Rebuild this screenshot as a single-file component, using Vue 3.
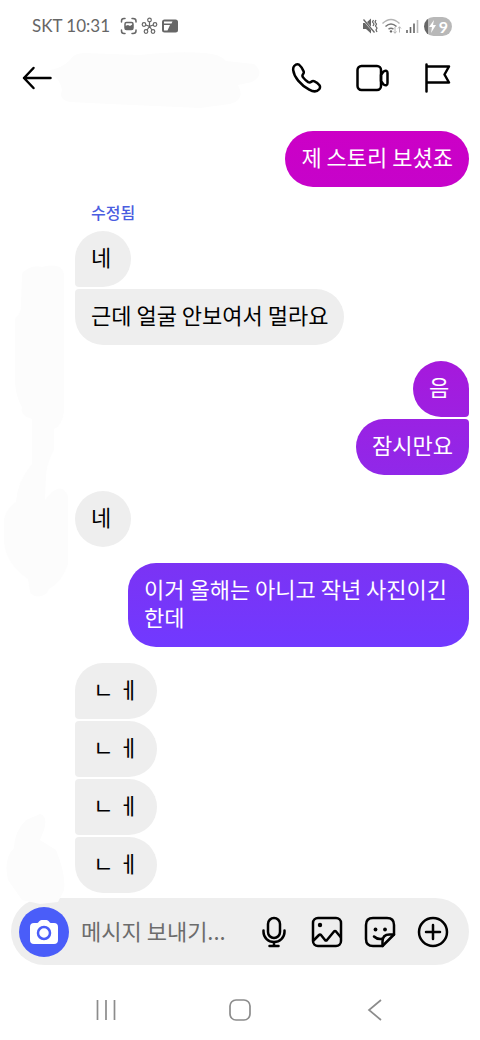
<script setup>
const groups = [
  { side: 'sent', items: [{ text: '제 스토리 보셨죠', tone: 'magenta' }] },
  { side: 'received', label: '수정됨', items: [{ text: '네' }, { text: '근데 얼굴 안보여서 멀라요' }] },
  { side: 'sent', items: [{ text: '음', tone: 'orchid' }, { text: '잠시만요', tone: 'violet' }] },
  { side: 'received', items: [{ text: '네' }] },
  { side: 'sent', items: [{ text: '이거 올해는 아니고 작년 사진이긴 한데', tone: 'indigo' }] },
  {
    side: 'received',
    wide: true,
    items: [{ text: 'ㄴ ㅔ' }, { text: 'ㄴ ㅔ' }, { text: 'ㄴ ㅔ' }, { text: 'ㄴ ㅔ' }],
  },
]
</script>

<template>
  <div class="screen">
    <div class="status">
      <span class="carrier">SKT 10:31</span>
      <svg class="status-left" width="60" height="20" viewBox="0 0 60 20" aria-hidden="true">
        <g fill="none" stroke="#666" stroke-width="1.5" stroke-linecap="round">
          <path d="M1.5 6V5Q1.5 2.5 4 2.500H5M12 2.500h1Q16 2.500 16 5v1M16 14v1q0 2.500-3 2.500h-1M5 17.500H4Q1.500 17.500 1.500 15v-1" />
          <rect x="5" y="6.500" width="8" height="7" rx="1.500" />
        </g>
        <path d="M5 10l3-1 2 1 3-2v5.500H5z" fill="#666" />
        <g fill="none" stroke="#666" stroke-width="1.200">
          <circle cx="29.500" cy="4" r="1.800" />
          <circle cx="24" cy="8.500" r="1.800" />
          <circle cx="35" cy="8.500" r="1.800" />
          <circle cx="26" cy="15.500" r="1.800" />
          <circle cx="33" cy="15.500" r="1.800" />
          <path d="M29.500 5.800V10M25.700 9l3.800 1.400L33.300 9M27 14l2.500-3.500L32 14" />
        </g>
        <rect x="42" y="3.500" width="16" height="13" rx="2.500" fill="#666" />
        <path d="M44 5.500h8.500l-1 2H44zM44 9h6l-2.500 5.500H44z" fill="#fff" />
      </svg>
      <svg class="status-right" width="58" height="20" viewBox="0 0 58 20" aria-hidden="true">
        <path d="M1 7h3l5-4.500v15L4 13H1z" fill="#666" />
        <path d="M1 3l12 14" stroke="#fff" stroke-width="2" />
        <path d="M1.500 3.500l11 13" stroke="#666" stroke-width="1.300" />
        <path d="M11.500 4l-1 2 1.500 2-1 2M14 4l-1 2 1.500 2-1 2 1.500 2-1 2 1 2" fill="none" stroke="#666" stroke-width="1.200" />
        <g fill="none" stroke="#b4b4b4" stroke-width="1.500">
          <path d="M20.500 7.500Q29 -.5 37.500 7.500" />
          <path d="M23.500 10.500Q29 5.500 34.500 10.500" stroke="#777" />
          <path d="M26.500 13.200Q29 11.500 31.500 13.200" stroke="#777" />
          <path d="M33 11v6M31.500 15.500l1.500 1.800 1.500-1.800M37.500 16.500V11M36 12.500l1.500-1.800 1.500 1.800" stroke-width="1" />
        </g>
        <path d="M29 14l1.500 1.200L29 17l-1.500-1.800z" fill="#666" />
        <path d="M45 17v-3M48.500 17v-6M52 17V7.500" stroke="#666" stroke-width="1.600" />
        <path d="M55.500 17V4" stroke="#bbb" stroke-width="1.600" />
      </svg>
      <span class="battery">
        <svg width="9" height="13" viewBox="0 0 9 13" aria-hidden="true">
          <path d="M6 0L1 7h3L3 13l5-8H5z" fill="#fff" />
        </svg>
        <span>9</span>
      </span>
    </div>

    <header class="header">
      <svg class="smudge name-smudge" width="212" height="58" viewBox="0 0 212 58" aria-hidden="true">
        <path d="M0 18Q12 16 20 8 24 1 34 1L90 3Q125-1 155 1 170 2 176 9L204 12Q216 22 202 30L188 33Q196 48 180 52L150 56 60 52 20 50Q8 48 12 38 10 26 0 22z" fill="#fcfcfc" />
      </svg>
      <button class="icon back" aria-label="뒤로">
        <svg width="30" height="24" viewBox="0 0 30 24">
          <path d="M28.500 12H2M11.500 2L2 12l9.500 10" fill="none" stroke="#000" stroke-width="2.500" stroke-linecap="round" stroke-linejoin="round" />
        </svg>
      </button>
      <div class="actions">
        <button class="icon" aria-label="음성 통화">
          <svg width="32" height="32" viewBox="0 0 32 32">
            <path d="M4.200 4Q6.500 1.500 9 2.600C11.300 4.500 12.800 7 13.700 9.500Q14.100 11 12.900 12.400 11.900 14 13.100 15.400C14.800 17.800 16.300 19 18.200 20.100Q19.800 20.900 21.300 19.700 22.800 18.500 24.500 19.300 27.500 20.700 29.500 23.200 30.700 25 29.200 27.200C26.900 30 23.200 29.900 19.200 27.700 10.300 22.700 4 15 3.200 8.200Q2.900 5.500 4.200 4z" fill="none" stroke="#000" stroke-width="2.500" stroke-linejoin="round" />
          </svg>
        </button>
        <button class="icon" aria-label="영상 통화">
          <svg width="34" height="32" viewBox="0 0 34 32">
            <g fill="none" stroke="#000" stroke-width="2.500" stroke-linejoin="round">
              <rect x="1.500" y="4" width="23.500" height="24" rx="4" />
              <path d="M25 13l2.500-3.500Q31.500 7.500 31.500 11v10Q31.500 24.500 27.500 22.500L25 19z" />
            </g>
          </svg>
        </button>
        <button class="icon" aria-label="신고">
          <svg width="28" height="32" viewBox="0 0 28 32">
            <path d="M2.500 2.500v27M2.500 4.500H25l-4.500 8L25 20.500H2.500" fill="none" stroke="#000" stroke-width="2.500" stroke-linecap="round" stroke-linejoin="round" />
          </svg>
        </button>
      </div>
    </header>

    <main class="chat">
      <svg class="smudge side-smudge" width="70" height="334" viewBox="0 0 70 334" aria-hidden="true">
        <path d="M20 10Q28 0 40 3 60-2 62 10V148Q60 162 52 165V186Q46 196 44 210L43 236 48 230Q60 218 66 232V300Q60 318 47 325L44 330Q34 336 28 328L26 315Q4 300 2 278V255Q4 245 14 238 15 218 30 200V155Q18 152 20 143 12 130 13 110V55Q20 48 19 40z" fill="#fcfcfc" />
      </svg>
      <section v-for="(group, i) in groups" :key="i" class="group" :class="[group.side, { wide: group.wide }]">
        <div v-if="group.label" class="label">{{ group.label }}</div>
        <p v-for="(item, j) in group.items" :key="j" class="bubble" :class="item.tone">{{ item.text }}</p>
      </section>
    </main>

    <form class="composer" @submit.prevent>
      <svg class="smudge bar-smudge" width="60" height="92" viewBox="0 0 60 92" aria-hidden="true">
        <path d="M34 0Q42 2 38 16L34 26 50 36Q60 60 58 76L52 88 34 90 16 86 2 66Q-3 45 8 34 8 18 20 6z" fill="#fcfcfc" />
      </svg>
      <button type="button" class="camera" aria-label="카메라">
        <svg width="28" height="26" viewBox="0 0 28 26">
          <path d="M4 4H7Q8 4 9 2.500 10 1 11.500 1h5Q18 1 19 2.500 20 4 21 4h3q4 0 4 4v13q0 4-4 4H4q-4 0-4-4V8q0-4 4-4z" fill="#fff" />
          <circle cx="14" cy="14" r="6" fill="none" stroke="#4a5df9" stroke-width="2.500" />
        </svg>
      </button>
      <input class="field" type="text" aria-label="메시지" placeholder="메시지 보내기..." />
      <div class="tools">
        <button type="button" class="icon" aria-label="음성 메시지">
          <svg width="32" height="32" viewBox="0 0 32 32">
            <g fill="none" stroke="#000" stroke-width="2.500" stroke-linecap="round">
              <rect x="10" y="2" width="12" height="20" rx="6" />
              <path d="M5.500 14.500v1.500a10.500 10 0 0 0 21 0v-1.500M16 26v4M11.500 30h9" />
            </g>
          </svg>
        </button>
        <button type="button" class="icon" aria-label="사진">
          <svg width="32" height="32" viewBox="0 0 32 32">
            <rect x="2" y="2" width="28" height="28" rx="5" fill="none" stroke="#000" stroke-width="2.500" />
            <circle cx="9" cy="9" r="2.200" fill="#000" />
            <path d="M2.500 24.500L8 19q1-1 2 0l4 5q1 1 2 0l7-8.500q1-1 2 0l5 6" fill="none" stroke="#000" stroke-width="2.500" stroke-linejoin="round" />
          </svg>
        </button>
        <button type="button" class="icon" aria-label="스티커">
          <svg width="32" height="32" viewBox="0 0 32 32">
            <g fill="none" stroke="#000" stroke-width="2.500" stroke-linejoin="round" stroke-linecap="round">
              <path d="M18.500 30H9Q2 30 2 23V9q0-7 7-7h14q7 0 7 7v9.500z" />
              <path d="M18.500 30v-4.500q0-7 7-7H30M10 20.500q3 3 8 2.300" />
            </g>
            <circle cx="11.500" cy="13.500" r="1.900" fill="#000" />
            <circle cx="21" cy="13.500" r="1.900" fill="#000" />
          </svg>
        </button>
        <button type="button" class="icon" aria-label="더보기">
          <svg width="32" height="32" viewBox="0 0 32 32">
            <g fill="none" stroke="#000" stroke-width="2.500" stroke-linecap="round">
              <circle cx="16" cy="16" r="14" />
              <path d="M16 9v14M9 16h14" />
            </g>
          </svg>
        </button>
      </div>
    </form>

    <nav class="system-nav" aria-label="시스템">
      <button class="icon" aria-label="최근 앱">
        <svg width="24" height="24" viewBox="0 0 24 24">
          <path d="M3.500 2v20M12 2v20M20.500 2v20" stroke="#8c8c8c" stroke-width="1.700" />
        </svg>
      </button>
      <button class="icon" aria-label="홈">
        <svg width="24" height="24" viewBox="0 0 24 24">
          <rect x="2" y="2" width="20" height="20" rx="6" fill="none" stroke="#8c8c8c" stroke-width="1.700" />
        </svg>
      </button>
      <button class="icon" aria-label="이전">
        <svg width="24" height="24" viewBox="0 0 24 24">
          <path d="M19 2L7 12l12 10" fill="none" stroke="#8c8c8c" stroke-width="1.700" />
        </svg>
      </button>
    </nav>
  </div>
</template>

<style>
body {
  margin: 0;
  background: #fff;
}
</style>

<style scoped>
.screen {
  display: flex;
  flex-direction: column;
  min-height: 100vh;
  overflow: hidden;
  background: #fff;
  color: #000;
  font-family: "Noto Sans CJK KR", sans-serif;
}

svg {
  display: block;
}

button {
  display: flex;
  align-items: center;
  justify-content: center;
  padding: 0;
  border: 0;
  background: none;
}

.smudge {
  position: absolute;
  pointer-events: none;
}

.status {
  display: flex;
  align-items: center;
  height: 52px;
  padding: 0 28px 0 32px;
}

.carrier {
  color: #666;
  font-family: Lato, sans-serif;
  font-size: 17px;
  line-height: 24px;
}

.status-left {
  margin-left: 10px;
}

.status-right {
  margin-left: auto;
}

.battery {
  display: flex;
  align-items: center;
  justify-content: center;
  gap: 2px;
  width: 28px;
  height: 19px;
  margin-left: 4px;
  border-radius: 10px;
  background: linear-gradient(90deg, #666 4px, #b8b8b8 4px);
  color: #fff;
  font-family: Lato, sans-serif;
  font-size: 16px;
  font-weight: 700;
  line-height: 19px;
}

.header {
  position: relative;
  display: flex;
  align-items: center;
  justify-content: space-between;
  height: 52px;
  padding: 0 28px 0 22px;
}

.name-smudge {
  left: 50px;
  top: 0;
}

.back,
.actions {
  position: relative;
}

.actions {
  display: flex;
  gap: 34px;
}

.chat {
  position: relative;
  display: flex;
  flex-direction: column;
  gap: 16px;
  padding: 27px 11px 5px 75px;
}

.side-smudge {
  left: 2px;
  top: 160px;
}

.group {
  display: flex;
  flex-direction: column;
  align-items: flex-start;
  gap: 2px;
}

.sent {
  align-items: flex-end;
}

.label {
  margin-bottom: 8px;
  padding-left: 16px;
  color: #4a5de0;
  font-size: 16px;
  font-weight: 500;
  line-height: 18px;
}

.bubble {
  box-sizing: border-box;
  min-width: 56px;
  max-width: 341px;
  margin: 0;
  padding: 11px 16px 17px;
  border-radius: 28px;
  background: #eee;
  font-size: 22px;
  line-height: 28px;
  word-break: keep-all;
}

.wide .bubble {
  min-width: 82px;
  text-align: center;
}

.received .bubble:not(:last-child) {
  border-bottom-left-radius: 4px;
}

.received .bubble + .bubble {
  border-top-left-radius: 4px;
}

.sent .bubble {
  color: #fff;
}

.sent .bubble:not(:last-child) {
  border-bottom-right-radius: 4px;
}

.sent .bubble + .bubble {
  border-top-right-radius: 4px;
}

.sent .magenta {
  background: linear-gradient(#cc00c6, #c603ca);
}

.sent .orchid {
  background: linear-gradient(#a619dc, #9d20e1);
}

.sent .violet {
  background: linear-gradient(#9a22e3, #9028e9);
}

.sent .indigo {
  background: linear-gradient(#7b33f4, #7139ff);
}

.composer {
  position: relative;
  display: flex;
  align-items: center;
  height: 67px;
  margin: 0 11px;
  padding: 0 20px 0 8px;
  box-sizing: border-box;
  border-radius: 34px;
  background: #eee;
}

.bar-smudge {
  left: -5px;
  top: -84px;
}

.camera {
  position: relative;
  flex: none;
  width: 50px;
  height: 50px;
  border-radius: 50%;
  background: #4a5df9;
}

.field {
  flex: 1;
  min-width: 0;
  height: 40px;
  margin: 0 12px;
  padding: 0 0 4px;
  box-sizing: border-box;
  border: 0;
  outline: 0;
  background: none;
  color: #000;
  font-family: inherit;
  font-size: 22px;
}

.field::placeholder {
  color: #6c6c6c;
  opacity: 1;
}

.tools {
  display: flex;
  gap: 21px;
}

.system-nav {
  display: flex;
  justify-content: center;
  gap: 110px;
  padding: 33px 0 18px;
}
</style>
